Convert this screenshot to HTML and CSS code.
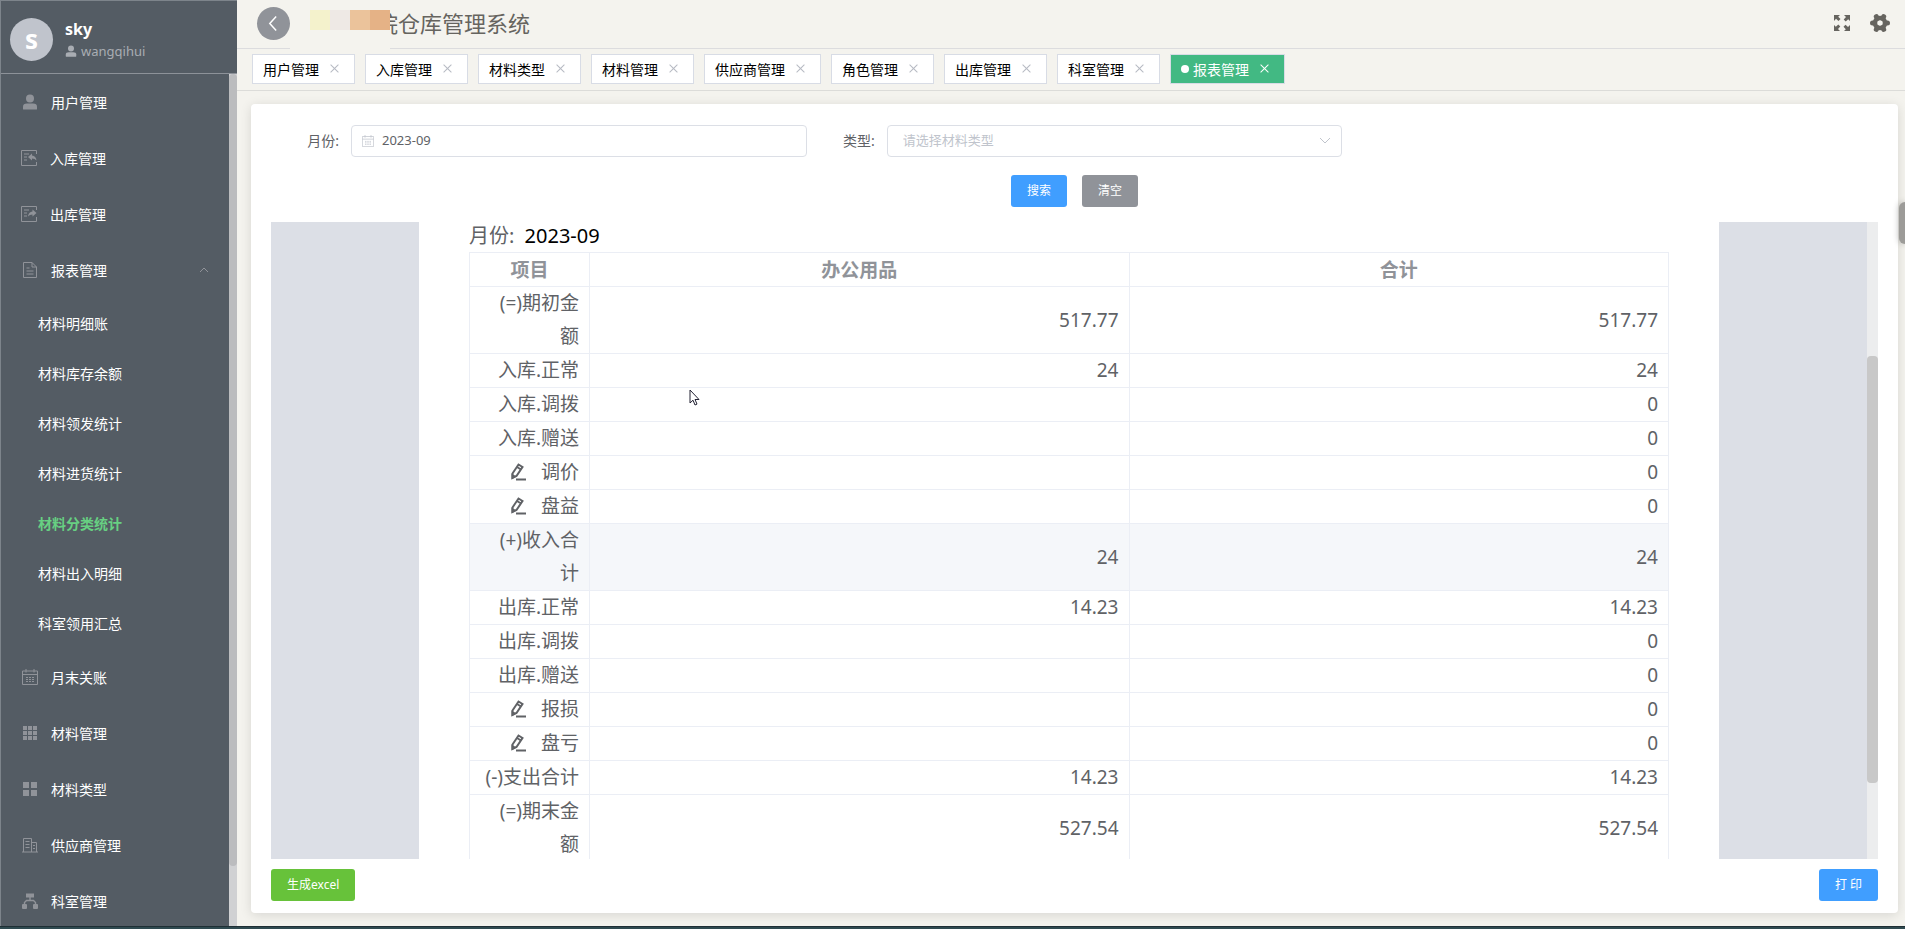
FILE: index.html
```html
<!DOCTYPE html>
<html lang="zh-CN">
<head>
<meta charset="utf-8">
<title>仓库管理系统</title>
<link rel="stylesheet" href="styles.css">
</head>
<body>
<svg class="sprite" aria-hidden="true">
  <symbol id="i-user" viewBox="0 0 16 16"><circle cx="8" cy="4.500" r="4"/><path d="M1 15v-2.500Q1 9.500 5 9.500h6q4 0 4 3V15q0 .5-.5.5h-13Q1 15.500 1 15z"/></symbol>
  <symbol id="i-in" viewBox="0 0 16 16"><path d="M15.500 4V.5H.5v15h15V12M3 4h5M3 7h3M3 10h3" fill="none" stroke="currentColor"/><path d="M7 7l4-3.500v2q4 .5 4.500 5Q14 8.500 11 8.500v2z"/></symbol>
  <symbol id="i-out" viewBox="0 0 16 16"><path d="M15.500 4V.5H.5v15h15V11M3 4h5M3 7h3M3 10h3" fill="none" stroke="currentColor"/><path d="M15.500 7l-4-3.500v2q-4 .5-4.500 5Q8.500 8.500 11.500 8.500v2z"/></symbol>
  <symbol id="i-doc" viewBox="0 0 16 16"><path d="M1.500.5h8.500l4.500 4.500v10.500h-13zM10 .5V5h4.500M4.500 6h3M4.500 9h7M4.500 12h7" fill="none" stroke="currentColor"/></symbol>
  <symbol id="i-cal" viewBox="0 0 16 16"><path d="M.5 2h15v13.500H.5zM.5 5.500h15M4 0v3.500M12 0v3.500" fill="none" stroke="currentColor"/><path d="M4 8.500h9M4 10.500h9M4 12.500h9" fill="none" stroke="currentColor" stroke-dasharray="2 1"/></symbol>
  <symbol id="i-grid9" viewBox="0 0 14 14"><path d="M0 0h4v4H0zM5 0h4v4H5zM10 0h4v4h-4zM0 5h4v4H0zM5 5h4v4H5zM10 5h4v4h-4zM0 10h4v4H0zM5 10h4v4H5zM10 10h4v4h-4z"/></symbol>
  <symbol id="i-grid4" viewBox="0 0 14 14"><path d="M0 0h6v6H0zM8 0h6v6H8zM0 8h6v6H0zM8 8h6v6H8z"/></symbol>
  <symbol id="i-office" viewBox="0 0 16 16"><path d="M1.500 15V1.500h8V15M9.500 5.500h5V15M0 15h16M3.500 4.500h4M3.500 7.500h4M3.500 10.500h4M11 8.500h2M11 11.500h2" fill="none" stroke="currentColor"/></symbol>
  <symbol id="i-tree" viewBox="0 0 16 16"><path d="M4 .5h8v4H4z"/><rect x="0" y="11" width="5" height="5" rx="1"/><rect x="11" y="11" width="5" height="5" rx="1"/><path d="M8 4v3.500M2.500 11V9.500l2-2h7l2 2V11" fill="none" stroke="currentColor" stroke-width="1.400"/></symbol>
  <symbol id="i-edit" viewBox="0 0 18 18"><path d="M3.500 10.500L9.500 1.500l4 2.500-6 9-4 2zM8 4l4 2.500M7 16.500h10" fill="none" stroke="currentColor" stroke-width="2"/><path d="M2.500 10.500v6l5-3z"/></symbol>
</svg>
<div class="app">
  <aside class="side">
    <header class="profile">
      <div class="avatar">s</div>
      <div>
        <div class="nick">sky</div>
        <div class="account"><svg class="account-icon"><use href="#i-user"/></svg>wangqihui</div>
      </div>
    </header>
    <div class="menu-wrap">
      <nav class="menu">
        <a href="#"><svg><use href="#i-user"/></svg>用户管理</a>
        <a href="#" class="wide-icon"><svg><use href="#i-in"/></svg>入库管理</a>
        <a href="#" class="wide-icon"><svg><use href="#i-out"/></svg>出库管理</a>
        <a href="#"><svg><use href="#i-doc"/></svg>报表管理
          <svg class="fold" viewBox="0 0 10 6"><path d="M1 5l4-4 4 4" fill="none" stroke="currentColor"/></svg></a>
        <div class="submenu">
          <a href="#">材料明细账</a>
          <a href="#">材料库存余额</a>
          <a href="#">材料领发统计</a>
          <a href="#">材料进货统计</a>
          <a href="#" class="current">材料分类统计</a>
          <a href="#">材料出入明细</a>
          <a href="#">科室领用汇总</a>
        </div>
        <a href="#"><svg><use href="#i-cal"/></svg>月末关账</a>
        <a href="#"><svg class="compact"><use href="#i-grid9"/></svg>材料管理</a>
        <a href="#"><svg class="compact"><use href="#i-grid4"/></svg>材料类型</a>
        <a href="#"><svg><use href="#i-office"/></svg>供应商管理</a>
        <a href="#"><svg><use href="#i-tree"/></svg>科室管理</a>
      </nav>
      <div class="menu-track"><div class="menu-thumb"></div></div>
    </div>
  </aside>

  <main class="main">
    <header class="topbar">
      <button class="back" aria-label="返回"><svg viewBox="0 0 16 16"><path d="M10.500 1.500L4.500 8l6 6.500" fill="none" stroke="currentColor" stroke-width="1.400"/></svg></button>
      <div class="brand">
        <h1>院仓库管理系统</h1>
        <div class="mask"><i class="m1"></i><i class="m2"></i><i class="m3"></i><i class="m4"></i></div>
      </div>
      <button class="tool" aria-label="全屏"><svg class="full" viewBox="0 0 16 16"><path d="M0 0h6L4.200 1.800l2.300 2.300-2 2-2.500-2.300L0 6zM16 0v6l-1.800-1.800-2.500 2.300-2-2 2.300-2.500L10 0zM0 16v-6l1.800 1.800 2.500-2.300 2 2-2.300 2.500L6 16zM16 16h-6l1.800-1.800-2.300-2.500 2-2 2.500 2.300L16 10z"/></svg></button>
      <button class="tool" aria-label="设置"><svg class="gear" viewBox="0 0 20 20"><g stroke="currentColor" stroke-width="5" stroke-linecap="round"><path d="M2.500 10h2M15.500 10h2M6.300 3.600l1 1.700M12.700 14.700l1 1.700M13.700 3.600l-1 1.700M7.300 14.700l-1 1.700"/></g><circle cx="10" cy="10" r="5" fill="none" stroke="currentColor" stroke-width="4.500"/></svg></button>
    </header>
    <nav class="tabs">
      <a href="#">用户管理<span class="x"></span></a>
      <a href="#">入库管理<span class="x"></span></a>
      <a href="#">材料类型<span class="x"></span></a>
      <a href="#">材料管理<span class="x"></span></a>
      <a href="#">供应商管理<span class="x"></span></a>
      <a href="#">角色管理<span class="x"></span></a>
      <a href="#">出库管理<span class="x"></span></a>
      <a href="#">科室管理<span class="x"></span></a>
      <a href="#" class="active">报表管理<span class="x"></span></a>
    </nav>
    <section class="card">
      <form class="filter">
        <div class="field">
          <label for="month">月份:</label>
          <div class="control">
            <svg class="date-icon"><use href="#i-cal"/></svg>
            <input id="month" class="with-icon" type="text" value="2023-09">
          </div>
        </div>
        <div class="field">
          <label for="kind">类型:</label>
          <div class="control">
            <select id="kind"><option>请选择材料类型</option></select>
            <svg class="drop" viewBox="0 0 12 8"><path d="M1 1l5 5 5-5" fill="none" stroke="currentColor"/></svg>
          </div>
        </div>
      </form>
      <div class="actions">
        <button class="btn primary">搜索</button>
        <button class="btn info">清空</button>
      </div>
      <div class="viewer">
        <div class="sheet">
          <p class="period">月份: <span>2023-09</span></p>
          <table>
            <colgroup><col class="c-item"><col><col></colgroup>
            <thead><tr><th>项目</th><th>办公用品</th><th>合计</th></tr></thead>
            <tbody>
              <tr><td>(=)期初金额</td><td>517.77</td><td>517.77</td></tr>
              <tr><td>入库.正常</td><td>24</td><td>24</td></tr>
              <tr><td>入库.调拨</td><td></td><td>0</td></tr>
              <tr><td>入库.赠送</td><td></td><td>0</td></tr>
              <tr><td><svg class="edit"><use href="#i-edit"/></svg>调价</td><td></td><td>0</td></tr>
              <tr><td><svg class="edit"><use href="#i-edit"/></svg>盘益</td><td></td><td>0</td></tr>
              <tr class="hover"><td>(+)收入合计</td><td>24</td><td>24</td></tr>
              <tr><td>出库.正常</td><td>14.23</td><td>14.23</td></tr>
              <tr><td>出库.调拨</td><td></td><td>0</td></tr>
              <tr><td>出库.赠送</td><td></td><td>0</td></tr>
              <tr><td><svg class="edit"><use href="#i-edit"/></svg>报损</td><td></td><td>0</td></tr>
              <tr><td><svg class="edit"><use href="#i-edit"/></svg>盘亏</td><td></td><td>0</td></tr>
              <tr><td>(-)支出合计</td><td>14.23</td><td>14.23</td></tr>
              <tr><td>(=)期末金额</td><td>527.54</td><td>527.54</td></tr>
            </tbody>
          </table>
        </div>
        <div class="track"><div class="thumb"></div></div>
      </div>
      <footer class="foot">
        <button class="btn success">生成excel</button>
        <button class="btn primary">打 印</button>
      </footer>
    </section>
    <div class="handle"></div>
  </main>
</div>
<div class="strip"></div>
<svg class="cursor" viewBox="0 0 11 18"><path d="M1 1v13l3-2.800 2 4.800 2-.9-2-4.600h4z" fill="#fff" stroke="#223"/></svg>
</body>
</html>
```
FILE: styles.css
```css
* { box-sizing: border-box; }
body {
  margin: 0;
  height: 100vh;
  display: flex;
  flex-direction: column;
  overflow: hidden;
  font-family: "Noto Sans", "Noto Sans CJK SC", sans-serif;
  font-size: 14px;
  color: #606266;
}
button, input, select { font-family: inherit; }
a { text-decoration: none; color: inherit; }
svg { fill: currentColor; flex: none; }
.sprite { position: absolute; width: 0; height: 0; }

.app { flex: 1; min-height: 0; display: flex; }
.strip { height: 3px; background: #2f4a50; border-top: 1px solid #1f2f35; }

/* sidebar */
.side {
  width: 237px;
  display: flex;
  flex-direction: column;
  background: #545c64;
  border-left: 1px solid #7d848b;
  border-top: 1px solid #7d848b;
}
.profile {
  height: 73px;
  display: flex;
  align-items: center;
  gap: 12px;
  padding: 5px 9px 0;
  border-bottom: 1px solid #8d9299;
}
.avatar {
  width: 43px;
  height: 43px;
  border-radius: 50%;
  background: #c0c4cc;
  color: #fff;
  font-size: 26px;
  font-weight: 700;
  line-height: 43px;
  text-align: center;
}
.nick { color: #fff; font-size: 16px; font-weight: 700; line-height: 22px; }
.account { display: flex; align-items: center; gap: 4px; color: #a9adb3; font-size: 13px; line-height: 22px; }
.account-icon { width: 12px; height: 12px; }
.menu-wrap { flex: 1; min-height: 0; display: flex; }
.menu { flex: 1; overflow: hidden; color: #fff; }
.menu a { display: flex; align-items: center; height: 56px; padding-left: 21px; }
.menu svg { width: 16px; height: 16px; margin-right: 13px; color: #909399; }
.menu .wide-icon { padding-left: 20px; }
.menu svg.compact { width: 14px; height: 14px; margin: 0 14px 0 1px; }
.menu svg.fold { width: 10px; height: 6px; margin: 0 20px 0 auto; }
.menu .submenu a { height: 50px; padding-left: 37px; }
.submenu { padding-bottom: 1px; }
.submenu .current { color: #67d082; font-weight: 700; }
.menu-track { width: 8px; background: #d0d1d3; }
.menu-thumb { height: 93%; border-radius: 4px; background: #bbbcbe; }

/* top area */
.main {
  position: relative;
  flex: 1;
  min-width: 0;
  display: flex;
  flex-direction: column;
  background: #f4f3ee;
}
.topbar {
  height: 49px;
  display: flex;
  align-items: center;
  padding: 0 15px 2px 20px;
  border-bottom: 1px solid #dcdcde;
}
.back {
  width: 33px;
  height: 33px;
  padding: 8px;
  border: 0;
  border-radius: 50%;
  background: #909399;
  color: #fff;
}
.back svg { display: block; width: 17px; height: 17px; }
.brand { position: relative; flex: 1; padding-left: 86px; }
.brand h1 { margin: 0; font-size: 22px; font-weight: 400; line-height: 30px; color: #66645f; }
.mask {
  position: absolute;
  top: 2px;
  left: 0;
  width: 100px;
  height: 40px;
  padding-left: 20px;
  display: flex;
  background: #f4f3ee;
}
.mask i { flex: 1; height: 20px; }
.m1 { background: #f4f2cc; }
.m2 { background: #eee9e5; }
.m3 { background: #ebc39b; }
.m4 { background: #e5b286; }
.tool { display: flex; padding: 0; border: 0; background: none; color: #66645f; margin-left: 20px; }
.full { width: 16px; height: 16px; }
.gear { width: 20px; height: 20px; }
.tabs {
  height: 42px;
  display: flex;
  align-items: center;
  gap: 10px;
  padding: 0 15px 2px;
  border-bottom: 1px solid #dcdcd9;
}
.tabs a {
  display: flex;
  align-items: center;
  height: 30px;
  padding: 0 15px 0 10px;
  background: #fff;
  border: 1px solid #d8dce5;
  color: #000;
}
.x { position: relative; width: 9px; height: 9px; margin-left: 11px; color: #b6bac2; }
.x::before, .x::after {
  content: "";
  position: absolute;
  top: 4px;
  left: -1px;
  width: 11px;
  height: 1px;
  background: currentColor;
  transform: rotate(45deg);
}
.x::after { transform: rotate(-45deg); }
.tabs .active { background: #42b983; color: #fff; }
.active .x { color: #fff; }
.active::before { content: ""; width: 8px; height: 8px; margin-right: 4px; border-radius: 50%; background: #fff; }

/* content card */
.card {
  flex: 1;
  min-height: 0;
  display: flex;
  flex-direction: column;
  margin: 13px 7px 13px 14px;
  padding: 21px 20px 12px;
  border-radius: 4px;
  background: #fff;
  box-shadow: 0 2px 12px rgba(0, 0, 0, .12);
}
.filter { display: grid; grid-template-columns: repeat(3, 1fr); }
.field { display: flex; }
.field label { width: 80px; padding-right: 12px; line-height: 32px; text-align: right; }
.control { position: relative; flex: 1; }
.control input, .control select {
  width: 100%;
  height: 32px;
  padding: 0 15px 2px;
  border: 1px solid #dcdfe6;
  border-radius: 4px;
  background: #fff;
  color: #606266;
  font-size: 13px;
  appearance: none;
}
.control input.with-icon { padding-left: 30px; }
.control select { color: #c0c4cc; }
.date-icon { position: absolute; left: 11px; top: 10px; width: 12px; height: 12px; color: #c0c4cc; }
.drop { position: absolute; right: 11px; top: 12px; width: 12px; height: 8px; color: #c0c4cc; }
.actions { display: flex; justify-content: center; gap: 15px; margin: 18px 0 15px; }
.btn {
  height: 32px;
  padding: 0 16px;
  border: 0;
  border-radius: 3px;
  color: #fff;
  font-size: 12px;
  line-height: 32px;
}
.primary { background: #409eff; }
.info { background: #909399; }
.success { background: #67c23a; }

.viewer { flex: 1; min-height: 0; display: flex; overflow: hidden; background: #dcdfe6; }
.sheet { flex: 1; margin: 0 148px; padding: 0 50px; background: #fff; }
.period { margin: 0; padding-bottom: 2px; line-height: 28px; font-size: 20px; }
.period span { color: #000; margin-left: 5px; }
table {
  width: 100%;
  table-layout: fixed;
  border-collapse: collapse;
  font-size: 19px;
  line-height: 33px;
}
.c-item { width: 120px; }
th, td { height: 34px; padding: 0 10px; border: 1px solid #ebeef5; text-align: right; font-weight: 400; }
td:first-child { padding-left: 13px; }
th { padding-top: 2px; line-height: 31px; text-align: center; color: #909399; font-weight: 700; }
.hover td { background: #f5f7fa; }
.edit { width: 18px; height: 18px; margin-right: 14px; vertical-align: -2px; }
.track { width: 11px; background: #ecedee; display: flex; flex-direction: column; }
.thumb { height: 67%; margin-top: 134px; border-radius: 4px; background: #c8c8c8; }
.foot { display: flex; justify-content: space-between; margin-top: 10px; }

.handle {
  position: absolute;
  right: 0;
  top: 202px;
  width: 6px;
  height: 42px;
  border-radius: 6px 0 0 6px;
  background: #9c9b98;
  box-shadow: 0 0 6px rgba(0, 0, 0, .3);
}
.cursor { position: absolute; left: 689px; top: 389px; width: 11px; height: 18px; }
```
